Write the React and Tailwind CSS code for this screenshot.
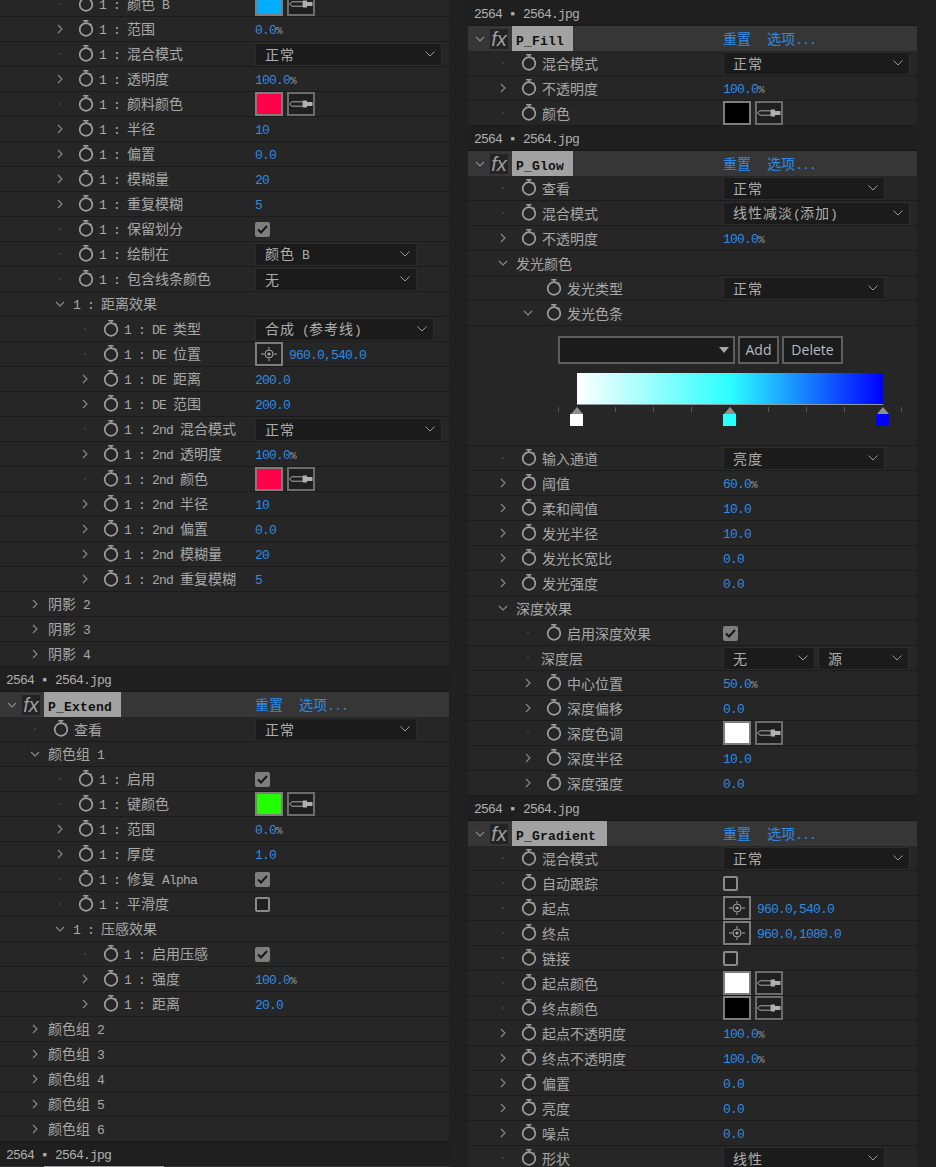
const mono = "font-['Liberation_Mono','Noto_Sans_CJK_SC',monospace]";

// latin runs are set in a narrower mono so that they sit on the 7px grid
function Mixed({ text }) {
  return text
    .split(/([\x00-\x7f▪]+)/)
    .filter(Boolean)
    .map((part, i) =>
      /^[\x00-\x7f▪]/.test(part) ? (
        <span key={i} className={`${mono} text-[13px] tracking-[-0.8px]`}>
          {part}
        </span>
      ) : (
        <span key={i}>{part}</span>
      )
    );
}

function Stopwatch() {
  return (
    <svg width="16" height="18" viewBox="0 0 16 18" fill="none" stroke="#9e9e9e" className="block">
      <circle cx="8" cy="10.5" r="6.3" strokeWidth="1.7" />
      <path d="M5.2 1.7H10.4M8 1.7V4.4" strokeWidth="1.4" />
      <path d="M12.2 4.6L13.6 5.8" strokeWidth="1.2" />
    </svg>
  );
}

function Chevron({ dir }) {
  if (dir === "r")
    return (
      <svg width="10" height="10" viewBox="0 0 10 10" fill="none" stroke="#8c8c8c" strokeWidth="1.1" className="block">
        <path d="M3 1L7 5L3 9" />
      </svg>
    );
  if (dir === "d")
    return (
      <svg width="10" height="10" viewBox="0 0 10 10" fill="none" stroke="#8c8c8c" strokeWidth="1.1" className="block">
        <path d="M1 3L5 7L9 3" />
      </svg>
    );
  return (
    <div className="w-[10px] h-[10px] flex items-center justify-center">
      <div className="w-[2px] h-[2px] bg-[#3c3c3c]" />
    </div>
  );
}

function Select({ text, w }) {
  return (
    <div className={`${w} h-[23px] flex items-center justify-between pl-[9px] pr-[5px] bg-[#1b1b1b] border border-[#2c2c2c] tracking-[1px] text-[#adadad] whitespace-pre`}>
      <span>
        <Mixed text={text} />
      </span>
      <svg width="10" height="6" viewBox="0 0 10 6" fill="none" stroke="#9a9a9a" strokeWidth="1" className="mr-[1px]">
        <path d="M0.5 0.5L5 5L9.5 0.5" />
      </svg>
    </div>
  );
}

function Swatch({ color }) {
  return (
    <div className="flex gap-[4px]">
      <div className={`w-[28px] h-[24px] border-2 border-[#7d7d7d] ${color}`} />
      <div className="w-[28px] h-[24px] border-2 border-[#6c6c6c] bg-[#1f1f1f] flex items-center justify-center">
        <svg width="24" height="10" viewBox="0 0 24 10">
          <path d="M0.5 5L3 2.8H14V7.2H3Z" fill="none" stroke="#aaa" />
          <path d="M14 1.5H18V3H23.5V7H18V8.5H14Z" fill="#b0b0b0" />
        </svg>
      </div>
    </div>
  );
}

function Check({ on }) {
  if (!on) return <div className="w-[15px] h-[15px] rounded-[2px] border-2 border-[#8a8a8a] bg-[#1f1f1f]" />;
  return (
    <div className="w-[15px] h-[15px] rounded-[2px] bg-[#7e7e7e] flex items-center justify-center">
      <svg width="11" height="9" viewBox="0 0 11 9" fill="none" stroke="#161616" strokeWidth="2">
        <path d="M1 4.5L4 7.5L10 1" />
      </svg>
    </div>
  );
}

function Point({ value }) {
  return (
    <div className="flex items-center gap-[6px]">
      <div className="w-[28px] h-[24px] border-2 border-[#7d7d7d] bg-[#222] flex items-center justify-center">
        <svg width="16" height="14" viewBox="0 0 16 14" fill="none" stroke="#a8a8a8">
          <circle cx="8" cy="7" r="4" />
          <circle cx="8" cy="7" r="1.6" fill="#a8a8a8" stroke="none" />
          <path d="M0 7H3.5M12.5 7H16M8 0V2.5M8 11.5V14" />
        </svg>
      </div>
      <span className={`${mono} text-[13px] tracking-[-0.8px] text-[#2f8ae4] pt-[2px]`}>{value}</span>
    </div>
  );
}

function Num({ value, pct }) {
  return (
    <span className={`${mono} text-[13px] tracking-[-0.8px] text-[#2f8ae4] pt-[2px]`}>
      {value}
      {pct && <span className="text-[11px] text-[#9a9a9a] tracking-[-0.4px]">%</span>}
    </span>
  );
}

const num = (value) => <Num value={value} />;
const pct = (value) => <Num value={value} pct />;
const sel = (text, w = "w-[187px]") => <Select text={text} w={w} />;
const narrow = (text) => <Select text={text} w="w-[162px]" />;
const swatch = (color) => <Swatch color={color} />;
const check = (on) => <Check on={on} />;
const point = (value) => <Point value={value} />;

const indents = ["pl-[30px]", "pl-[55px]", "pl-[80px]"];

function Row({ level, dir, watch = true, label, children }) {
  return (
    <div className="h-[25px] flex items-center border-b border-[#1b1b1b] bg-[#262626] whitespace-pre">
      <div className={`w-[255px] shrink-0 flex items-center ${indents[level]}`}>
        <Chevron dir={dir} />
        {watch ? (
          <>
            <div className="ml-[13px] mr-[5px] -mt-[2px]">
              <Stopwatch />
            </div>
            <span>
              <Mixed text={label} />
            </span>
          </>
        ) : (
          <span className="ml-[8px]">
            <Mixed text={label} />
          </span>
        )}
      </div>
      {children}
    </div>
  );
}

function Title({ h = "h-[25px]" }) {
  return (
    <div className={`${h} flex items-center pl-[6px] pt-[3px] bg-[#1f1f1f] border-b border-[#181818] text-[#b0b0b0] whitespace-pre ${mono} text-[13px] tracking-[-0.8px]`}>
      2564 ▪ 2564.jpg
    </div>
  );
}

function FxHeader({ name, w }) {
  return (
    <div className="h-[25px] flex items-center bg-[#363636]">
      <div className="w-[22px] flex justify-center pl-[2px]">
        <Chevron dir="d" />
      </div>
      <div className="w-[18px] h-[20px] bg-[#232323] flex items-center justify-center font-['Liberation_Sans',sans-serif] italic text-[20px] leading-none text-[#a0a0a0]">
        fx
      </div>
      <div className={`${w} ml-[4px] h-full bg-[#a2a2a2] flex items-center pl-[4px] pt-[5px] ${mono} text-[13px] font-bold text-[#111] tracking-[0.2px]`}>
        {name}
      </div>
      <div className="flex-1" />
      <div className="w-[194px] flex text-[#2f8ae4] shrink-0 whitespace-pre pt-[1px]">
        <span className="w-[44px]">重置</span>
        <span>
          <Mixed text="选项..." />
        </span>
      </div>
    </div>
  );
}

const leftTop = [
  { level: 1, label: "1 : 颜色 B", v: swatch("bg-[#00aeff]") },
  { level: 1, dir: "r", label: "1 : 范围", v: pct("0.0") },
  { level: 1, label: "1 : 混合模式", v: sel("正常") },
  { level: 1, dir: "r", label: "1 : 透明度", v: pct("100.0") },
  { level: 1, label: "1 : 颜料颜色", v: swatch("bg-[#ff0049]") },
  { level: 1, dir: "r", label: "1 : 半径", v: num("10") },
  { level: 1, dir: "r", label: "1 : 偏置", v: num("0.0") },
  { level: 1, dir: "r", label: "1 : 模糊量", v: num("20") },
  { level: 1, dir: "r", label: "1 : 重复模糊", v: num("5") },
  { level: 1, label: "1 : 保留划分", v: check(true) },
  { level: 1, label: "1 : 绘制在", v: narrow("颜色 B") },
  { level: 1, label: "1 : 包含线条颜色", v: narrow("无") },
  { level: 1, dir: "d", watch: false, label: "1 : 距离效果" },
  { level: 2, label: "1 : DE 类型", v: sel("合成 (参考线)", "w-[179px]") },
  { level: 2, label: "1 : DE 位置", v: point("960.0,540.0") },
  { level: 2, dir: "r", label: "1 : DE 距离", v: num("200.0") },
  { level: 2, dir: "r", label: "1 : DE 范围", v: num("200.0") },
  { level: 2, label: "1 : 2nd 混合模式", v: sel("正常") },
  { level: 2, dir: "r", label: "1 : 2nd 透明度", v: pct("100.0") },
  { level: 2, label: "1 : 2nd 颜色", v: swatch("bg-[#ff0049]") },
  { level: 2, dir: "r", label: "1 : 2nd 半径", v: num("10") },
  { level: 2, dir: "r", label: "1 : 2nd 偏置", v: num("0.0") },
  { level: 2, dir: "r", label: "1 : 2nd 模糊量", v: num("20") },
  { level: 2, dir: "r", label: "1 : 2nd 重复模糊", v: num("5") },
  { level: 0, dir: "r", watch: false, label: "阴影 2" },
  { level: 0, dir: "r", watch: false, label: "阴影 3" },
  { level: 0, dir: "r", watch: false, label: "阴影 4" },
];

const extend = [
  { level: 0, label: "查看", v: narrow("正常") },
  { level: 0, dir: "d", watch: false, label: "颜色组 1" },
  { level: 1, label: "1 : 启用", v: check(true) },
  { level: 1, label: "1 : 键颜色", v: swatch("bg-[#22ff00]") },
  { level: 1, dir: "r", label: "1 : 范围", v: pct("0.0") },
  { level: 1, dir: "r", label: "1 : 厚度", v: num("1.0") },
  { level: 1, label: "1 : 修复 Alpha", v: check(true) },
  { level: 1, label: "1 : 平滑度", v: check(false) },
  { level: 1, dir: "d", watch: false, label: "1 : 压感效果" },
  { level: 2, label: "1 : 启用压感", v: check(true) },
  { level: 2, dir: "r", label: "1 : 强度", v: pct("100.0") },
  { level: 2, dir: "r", label: "1 : 距离", v: num("20.0") },
  { level: 0, dir: "r", watch: false, label: "颜色组 2" },
  { level: 0, dir: "r", watch: false, label: "颜色组 3" },
  { level: 0, dir: "r", watch: false, label: "颜色组 4" },
  { level: 0, dir: "r", watch: false, label: "颜色组 5" },
  { level: 0, dir: "r", watch: false, label: "颜色组 6" },
];

const fill = [
  { level: 0, label: "混合模式", v: sel("正常") },
  { level: 0, dir: "r", label: "不透明度", v: pct("100.0") },
  { level: 0, label: "颜色", v: swatch("bg-black") },
];

const glowTop = [
  { level: 0, label: "查看", v: narrow("正常") },
  { level: 0, label: "混合模式", v: sel("线性减淡(添加)") },
  { level: 0, dir: "r", label: "不透明度", v: pct("100.0") },
  { level: 0, dir: "d", watch: false, label: "发光颜色" },
  { level: 1, label: "发光类型", v: narrow("正常") },
  { level: 1, dir: "d", label: "发光色条" },
];

const glowBottom = [
  { level: 0, label: "输入通道", v: narrow("亮度") },
  { level: 0, dir: "r", label: "阈值", v: pct("60.0") },
  { level: 0, dir: "r", label: "柔和阈值", v: num("10.0") },
  { level: 0, dir: "r", label: "发光半径", v: num("10.0") },
  { level: 0, dir: "r", label: "发光长宽比", v: num("0.0") },
  { level: 0, dir: "r", label: "发光强度", v: num("0.0") },
  { level: 0, dir: "d", watch: false, label: "深度效果" },
  { level: 1, label: "启用深度效果", v: check(true) },
  {
    level: 1,
    watch: false,
    label: "深度层",
    v: (
      <div className="flex gap-[3px]">
        <Select text="无" w="w-[92px]" />
        <Select text="源" w="w-[91px]" />
      </div>
    ),
  },
  { level: 1, dir: "r", label: "中心位置", v: pct("50.0") },
  { level: 1, dir: "r", label: "深度偏移", v: num("0.0") },
  { level: 1, label: "深度色调", v: swatch("bg-white") },
  { level: 1, dir: "r", label: "深度半径", v: num("10.0") },
  { level: 1, dir: "r", label: "深度强度", v: num("0.0") },
];

const gradient = [
  { level: 0, label: "混合模式", v: sel("正常") },
  { level: 0, label: "自动跟踪", v: check(false) },
  { level: 0, label: "起点", v: point("960.0,540.0") },
  { level: 0, label: "终点", v: point("960.0,1080.0") },
  { level: 0, label: "链接", v: check(false) },
  { level: 0, label: "起点颜色", v: swatch("bg-white") },
  { level: 0, label: "终点颜色", v: swatch("bg-black") },
  { level: 0, dir: "r", label: "起点不透明度", v: pct("100.0") },
  { level: 0, dir: "r", label: "终点不透明度", v: pct("100.0") },
  { level: 0, dir: "r", label: "偏置", v: num("0.0") },
  { level: 0, dir: "r", label: "亮度", v: num("0.0") },
  { level: 0, dir: "r", label: "噪点", v: num("0.0") },
  { level: 0, label: "形状", v: narrow("线性") },
];

function Rows({ items }) {
  return items.map((r) => (
    <Row key={r.label} level={r.level} dir={r.dir} watch={r.watch} label={r.label}>
      {r.v}
    </Row>
  ));
}

function Tick() {
  return <div className="w-px h-[5px] bg-[#555]" />;
}

function Stop({ color }) {
  return (
    <div className="w-[13px] flex flex-col items-center">
      <div className="w-0 h-0 border-x-[6px] border-x-transparent border-b-[7px] border-b-[#8f8f8f]" />
      <div className={`w-[13px] h-[12px] ${color}`} />
    </div>
  );
}

function GradientEditor() {
  return (
    <div className="h-[120px] bg-[#262626] border-b border-[#1b1b1b] pl-[90px] pt-[10px]">
      <div className="flex gap-[3px] h-[28px]">
        <div className="w-[177px] border-2 border-[#5e5e5e] bg-[#1b1b1b] flex items-center justify-end pr-[4px]">
          <div className="w-0 h-0 border-x-[5px] border-x-transparent border-t-[6px] border-t-[#a8a8a8]" />
        </div>
        {[
          ["Add", "w-[41px]"],
          ["Delete", "w-[61px]"],
        ].map(([text, w]) => (
          <div key={text} className={`${w} border-2 border-[#5e5e5e] bg-[#1b1b1b] flex items-center justify-center font-['Open_Sans',sans-serif] text-[14px] text-[#b4bcc4]`}>
            {text}
          </div>
        ))}
      </div>
      <div className="ml-[19px] mt-[9px] w-[306px] h-[32px] bg-linear-to-r/srgb from-white via-[#2bffff] to-[#0000ff] border-b border-[#8a9aa0]" />
      <div className="mt-[2px] w-[344px] flex justify-between">
        <Tick />
        <div className="w-[230px] flex justify-between">
          <Tick />
          <Tick />
          <Tick />
          <Tick />
          <Tick />
          <Tick />
          <Tick />
        </div>
        <Tick />
      </div>
      <div className="-mt-[5px] ml-[12px] w-[319px] flex justify-between">
        <Stop color="bg-white" />
        <Stop color="bg-[#2bffff]" />
        <Stop color="bg-[#0000ff]" />
      </div>
    </div>
  );
}

const wmClass =
  "absolute -rotate-45 font-['Liberation_Sans',sans-serif] font-bold text-[34px] tracking-[4px] text-white/[0.015] pointer-events-none whitespace-pre";

export default function App() {
  return (
    <div className="relative h-[1167px] w-[936px] overflow-hidden bg-[#202020] flex font-['Noto_Sans_CJK_SC',sans-serif] text-[14px] leading-none text-[#a8a8a8]">
      <div className="w-[449px] shrink-0 -mt-[8px]">
        <Rows items={leftTop} />
        <Title />
        <FxHeader name="P_Extend" w="w-[77px]" />
        <Rows items={extend} />
        <Title h="h-[24px]" />
        <div className="h-[25px] bg-[#363636] pl-[44px]">
          <div className="w-[120px] h-full bg-[#a2a2a2]" />
        </div>
      </div>

      <div className="w-[449px] shrink-0 ml-[19px]">
        <Title h="h-[26px]" />
        <FxHeader name="P_Fill" w="w-[61px]" />
        <Rows items={fill} />
        <Title />
        <FxHeader name="P_Glow" w="w-[61px]" />
        <Rows items={glowTop} />
        <GradientEditor />
        <Rows items={glowBottom} />
        <Title />
        <FxHeader name="P_Gradient" w="w-[95px]" />
        <Rows items={gradient} />
      </div>

      {/* faint site watermark over the panels */}
      <div className={`${wmClass} left-[130px] top-[60px]`}>HDSLIN.CN</div>
      <div className={`${wmClass} left-[550px] top-[50px]`}>HDSLIN.CN</div>
      <div className={`${wmClass} left-[600px] top-[450px]`}>HDSLIN.CN</div>
      <div className={`${wmClass} left-[130px] top-[860px]`}>HDSLIN.CN</div>
      <div className={`${wmClass} left-[550px] top-[860px]`}>HDSLIN.CN</div>
    </div>
  );
}
